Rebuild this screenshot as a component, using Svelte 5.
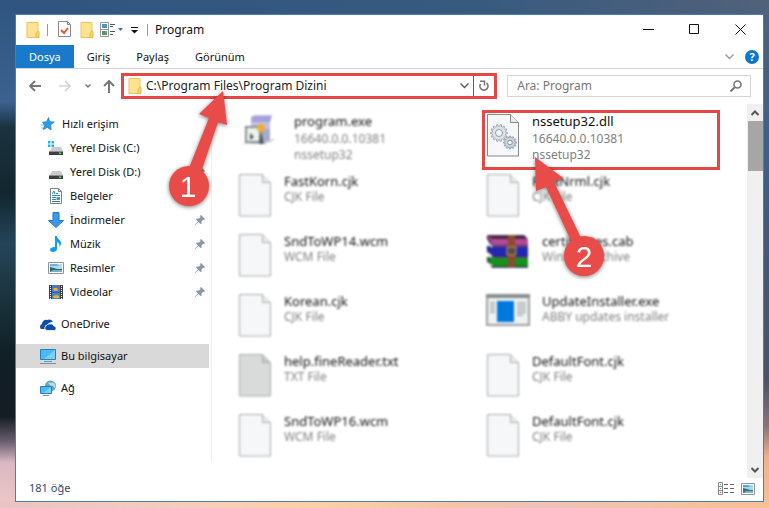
<script>
  const places = [
    { id: 'diskc', label: 'Yerel Disk (C:)', pin: false },
    { id: 'diskd', label: 'Yerel Disk (D:)', pin: true },
    { id: 'docs', label: 'Belgeler', pin: false },
    { id: 'down', label: 'İndirmeler', pin: true },
    { id: 'music', label: 'Müzik', pin: true },
    { id: 'pics', label: 'Resimler', pin: true },
    { id: 'video', label: 'Videolar', pin: true }
  ];
  const roots = [
    { id: 'cloud', label: 'OneDrive' },
    { id: 'pc', label: 'Bu bilgisayar', active: true },
    { id: 'net', label: 'Ağ' }
  ];
  const files = [
    { icon: 'setup', name: 'program.exe', info: ['16640.0.0.10381', 'nssetup32'] },
    { icon: 'dll', name: 'nssetup32.dll', info: ['16640.0.0.10381', 'nssetup32'], sharp: true },
    { icon: 'page', name: 'FastKorn.cjk', info: ['CJK File'] },
    { icon: 'page', name: 'FontNrml.cjk', info: ['CJK File'] },
    { icon: 'page', name: 'SndToWP14.wcm', info: ['WCM File'] },
    { icon: 'rar', name: 'certificates.cab', info: ['WinRAR archive'] },
    { icon: 'page', name: 'Korean.cjk', info: ['CJK File'] },
    { icon: 'app', name: 'UpdateInstaller.exe', info: ['ABBY updates installer'] },
    { icon: 'text', name: 'help.fineReader.txt', info: ['TXT File'] },
    { icon: 'page', name: 'DefaultFont.cjk', info: ['CJK File'] },
    { icon: 'page', name: 'SndToWP16.wcm', info: ['WCM File'] },
    { icon: 'page', name: 'DefaultFont.cjk', info: ['CJK File'] }
  ];
  // Outline of a gear: n teeth around a centre
  function gear(cx, cy, n, outer, inner) {
    const pts = [];
    for (let i = 0; i < n; i++) {
      for (const [k, r] of [[-0.26, inner], [-0.17, outer], [0.17, outer], [0.26, inner]]) {
        const a = ((i + k) / n) * Math.PI * 2;
        pts.push(`${(cx + r * Math.cos(a)).toFixed(2)},${(cy + r * Math.sin(a)).toFixed(2)}`);
      }
    }
    return pts.join(' ');
  }
</script>

{#snippet folder()}
  <svg width="15" height="18" viewBox="0 0 15 18" aria-hidden="true">
    <path d="M1 1.5h11v15H1z" fill="#ffe391" stroke="#eac35c" />
    <path d="M11.500 10.500h1.500v6h-3v-4z" fill="#f9d366" stroke="#e6b94a" />
  </svg>
{/snippet}

{#snippet picture()}
  <svg width="14" height="12" viewBox="0 0 14 12" aria-hidden="true">
    <path d="M.5.5h13v11H.5z" fill="#fff" stroke="#8d959a" />
    <path d="M2 2h10v8H2z" fill="#a9d3f3" />
    <path d="M2 2h5l2 2H2z" fill="#5a9fdc" />
    <path d="M2 5l4 1 3 1h3v3H2z" fill="#39756b" />
    <path d="M5 8h7v2H3z" fill="#7ab2cc" />
  </svg>
{/snippet}

{#snippet sideIcon(id)}
  <svg width="16" height="16" viewBox="0 0 16 16" aria-hidden="true">
    {#if id === 'star'}
      <path d="M8.500 1.500l1.200 4.200 4.600.3-3.700 2.900.6 5.100-3.900-2.600-4.100 2.400 1.400-4.500L2.500 6.200l4.200-.5z" fill="#2d9be8" stroke="#1b7cc9" stroke-width=".7" />
      <path d="M1 9h3M1 12h2" stroke="#6bbcf1" />
    {:else if id === 'diskc' || id === 'diskd'}
      {#if id === 'diskc'}
        <path d="M0 1h2.500v2.500H0zM3.500 1H6v2.500H3.500zM0 4.500h2.500V7H0zM3.500 4.500H6V7H3.500z" fill="#19b5f0" />
      {/if}
      <path d="M4 7h9l2 4H2z" fill="#c9cccd" />
      <path d="M1 11h14v4H1z" fill="#3c4043" />
      <path d="M1 11h14v1H1z" fill="#8c9092" />
      <path d="M11 12.500h2v1.500h-2z" fill="#39ee5d" />
    {:else if id === 'docs'}
      <path d="M2.500.5h8l3 3v12h-11z" fill="#fff" stroke="#7c8488" />
      <path d="M10.500.5v3h3" fill="none" stroke="#7c8488" />
      <path d="M4 6l2-3 1 3M8 5.500h2M4 7.500h8M4 9.500h4M4 11.500h4M4 13.500h8" fill="none" stroke="#2f85c8" />
      <path d="M8.500 9H12v3H8.500z" fill="#5a9b82" />
    {:else if id === 'down'}
      <path d="M5 .5h6v8h4.500L8 15.500.5 8.500H5z" fill="#3a98ea" stroke="#2379c8" />
    {:else if id === 'music'}
      <path d="M7 0h2c0 3 4 4 4 7 0 2-1 3-2 4 1-3 0-4-2-5v7c0 2-2 3-4 3s-3-1-3-2.500S4 11 7 11z" fill="#0ba1f2" />
    {:else if id === 'pics'}
      <path d="M.5 2.500h15v11H.5z" fill="#fff" stroke="#8d959a" />
      <path d="M2 4h12v8H2z" fill="#b5dbf4" />
      <path d="M2 4h7l2 2H2z" fill="#6eb2e4" />
      <path d="M2 7l4 1 3 1h5v3H2z" fill="#2f6b62" />
      <path d="M5 10h9v2H2z" fill="#78b0ca" />
    {:else if id === 'video'}
      <path d="M1 1h14v14H1z" fill="#3b3d40" />
      <path d="M4 1h8v7H4z" fill="#3d7cd4" />
      <path d="M4 8.500h8V15H4z" fill="#4585d6" />
      <path d="M6 4h4v2l-2 1-3-1zM5 12l4-1 2 1v2H6z" fill="#e8b432" />
      <path d="M9 2h3v3H9z" fill="#cf5136" />
      <path d="M2.500 2v13M13.500 2v13" stroke="#fff" stroke-dasharray="1 1" />
    {:else if id === 'cloud'}
      <path d="M1 13a3 3 0 0 1 1-5 4 4 0 0 1 5-4 5 5 0 0 1 6 2 5 5 0 0 0-5 2 4 4 0 0 0-3 5z" fill="#0b4da8" />
      <path d="M7 14.500a2.600 2.600 0 0 1-.5-5 3 3 0 0 1 3-1.500 3.600 3.600 0 0 1 4.500 2 2.300 2.300 0 0 1 .500 4.500z" fill="#0b4da8" stroke="#fff" stroke-width=".8" />
    {:else if id === 'pc'}
      <path d="M.5 1.500h15v10H.5z" fill="#49b9f8" stroke="#2c7fae" />
      <path d="M15 2v9H4z" fill="#7bd0fc" />
      <path d="M4 13.500h8M0 15.500h16" stroke="#6b93a8" />
    {:else}
      <circle cx="10.500" cy="6" r="5.500" fill="#5fa6c6" />
      <path d="M8 3c2-2 3 1 5-1 2 2 3 4 2 6-2 0-1-3-4-2z" fill="#b6dbe9" />
      <path d="M.5 6.500h11v7H.5z" fill="#49b9f8" stroke="#2c7fae" />
      <path d="M11 7v6H3z" fill="#7bd0fc" />
      <path d="M3 15.500h6" stroke="#6b93a8" />
    {/if}
  </svg>
{/snippet}

{#snippet fileIcon(kind)}
  {#if kind === 'setup'}
    <svg width="44" height="44" viewBox="0 0 44 44" aria-hidden="true">
      <path d="M13 4l4-2h17l-2 4v21l-4 4H13z" fill="#c3c1e2" />
      <path d="M14 3h20l-2 6H13z" fill="#a5a1dc" />
      <path d="M8 14h14v15H8z" fill="#eef3ec" stroke="#858c95" stroke-width="2" />
      <path d="M22 16h10v12H22z" fill="#a5abc8" />
      <circle cx="23" cy="15" r="4" fill="#f0ae38" />
      <path d="M23 18l3 13h-5zM12 20l4 4-4 3" fill="#4d5b60" />
      <path d="M6 30h8M31 29l5-3" stroke="#aaa" />
    </svg>
  {:else if kind === 'rar'}
    <svg width="44" height="44" viewBox="0 0 44 44" aria-hidden="true">
      <path d="M1 2h37l4 5v6H6L1 6z" fill="#b8479c" />
      <path d="M1 13h5l-1 1h37v10H6l-5-5z" fill="#2325b5" />
      <path d="M1 24h5v1h36v9H6l-5-5z" fill="#15921d" />
      <path d="M1 2h37l4 4H6z" fill="#4b2a45" />
      <path d="M1 4l5 9h36M1 14l5 10h36M1 25l5 9h36" fill="none" stroke="#332945" stroke-width="1.500" />
      <path d="M2 10l4 4M2 20l4 4M2 30l4 3" stroke="#dfe1e8" stroke-width="2" />
      <path d="M22 2h7v32h-7z" fill="#8a4c2c" />
      <path d="M21 14h9v8h-9z" fill="#594b43" stroke="#c99a55" />
    </svg>
  {:else if kind === 'app'}
    <svg width="44" height="44" viewBox="0 0 44 44" aria-hidden="true">
      <path d="M1 2h42v30H1z" fill="#f0f1f1" stroke="#9ba1a3" stroke-width="2" />
      <path d="M0 1h44v4H0z" fill="#858d8f" />
      <path d="M11 8h17v21H11z" fill="#0078dc" />
      <path d="M4 10h5M4 13h5M4 16h5M4 19h5M31 10h9M31 13h9M31 16h9M31 19h9M31 22h6" stroke="#b4b7b9" stroke-width="2" />
    </svg>
  {:else}
    <svg width="34" height="46" viewBox="0 0 34 46" aria-hidden="true">
      <path d="M1.500 1.500h23l8 8v33.500h-31z" fill={kind === 'text' ? '#d9dada' : '#f5f7f9'} stroke={kind === 'dll' ? '#888' : '#a8abac'} />
      <path d="M24.500 1.500v8h8" fill={kind === 'text' ? '#c8c9c9' : '#e9ebec'} stroke={kind === 'dll' ? '#888' : '#a8abac'} />
      {#if kind === 'dll'}
        <polygon points={gear(13, 20, 14, 8.5, 6.8)} fill="#dde3e9" stroke="#909ba6" stroke-width=".8" />
        <circle cx="13" cy="20" r="3.500" fill="#f7f9fa" stroke="#909ba6" />
        <polygon points={gear(24, 29.5, 12, 6.5, 5)} fill="#cbd5de" stroke="#8793a0" stroke-width=".8" />
        <circle cx="24" cy="29.500" r="2.300" fill="#f7f9fa" stroke="#8793a0" />
      {/if}
    </svg>
  {/if}
{/snippet}

<div class="desktop">
  <main class="window">
    <header class="titlebar">
      {@render folder()}
      <i class="rule first"></i>
      <button class="bare check" aria-label="Özellikler">
        <svg width="14" height="17" viewBox="0 0 14 17"><path d="M.5.5h9l3 3v12H.5z" fill="#fff" stroke="#8a8a8a" /><path d="M9.500.5v3h3" fill="none" stroke="#8a8a8a" /><path d="M3 9l3 3 4-5" fill="none" stroke="#ea5426" stroke-width="2" /></svg>
      </button>
      <button class="bare new" aria-label="Yeni klasör">{@render folder()}</button>
      <button class="bare view" aria-label="Görünüm seçenekleri">
        <svg width="23" height="16" viewBox="0 0 23 16"><path d="M.5.5h8v14h-8zM.5 7.500h8" fill="#fff" stroke="#999" /><path d="M2 2h5v4H2z" fill="#4b92d8" /><path d="M2 5h5v1H2zM2 9h5v4H2z" fill="#5b9662" /><path d="M5 9h2v2H5z" fill="#5ba2dc" /><path d="M10 2.500h5M10 4.500h3M10 9.500h5M10 12.500h3" stroke="#555" /><path d="M18 6h5l-2.500 3z" fill="#3f75b5" /></svg>
      </button>
      <button class="bare more" aria-label="Özelleştir">
        <svg width="7" height="8" viewBox="0 0 7 8"><path d="M0 1.500h7" stroke="#111" /><path d="M0 4h7L3.500 7.500z" fill="#111" /></svg>
      </button>
      <i class="rule"></i>
      <h1>Program</h1>
      <div class="controls">
        <button class="bare" aria-label="Simge durumuna küçült"><svg width="11" height="11"><path d="M0 5.500h11" stroke="#111" /></svg></button>
        <button class="bare" aria-label="Ekranı kapla"><svg width="11" height="11"><path d="M.5.5h9v9H.5z" fill="none" stroke="#111" /></svg></button>
        <button class="bare" aria-label="Kapat"><svg width="11" height="11"><path d="M.5.5l10 10M10.500.5l-10 10" stroke="#111" /></svg></button>
      </div>
    </header>

    <nav class="tabs">
      <button class="tab on">Dosya</button>
      <button class="tab">Giriş</button>
      <button class="tab">Paylaş</button>
      <button class="tab">Görünüm</button>
      <div class="help">
        <button class="bare" aria-label="Şeridi genişlet"><svg width="9" height="6"><path d="M.5.5l4 4 4-4" fill="none" stroke="#999" stroke-width="1.400" /></svg></button>
        <button class="bare question" aria-label="Yardım">?</button>
      </div>
    </nav>

    <div class="navrow">
      <button class="bare" aria-label="Geri"><svg width="12" height="12"><path d="M12 6H1M6 1L1 6l5 5" fill="none" stroke="#777" stroke-width="1.800" /></svg></button>
      <button class="bare fwd" aria-label="İleri"><svg width="12" height="12"><path d="M0 6h11M6 1l5 5-5 5" fill="none" stroke="#d5d5d5" stroke-width="1.600" /></svg></button>
      <button class="bare recent" aria-label="Son konumlar"><svg width="6" height="5"><path d="M.5.5L3 3 5.500.5" fill="none" stroke="#777" stroke-width="1.500" /></svg></button>
      <button class="bare up" aria-label="Yukarı"><svg width="12" height="13"><path d="M6 13V1M1 6l5-5 5 5" fill="none" stroke="#777" stroke-width="2" /></svg></button>
      <div class="address">
        {@render folder()}
        <input aria-label="Adres" value="C:\Program Files\Program Dizini" />
        <button class="bare" aria-label="Önceki konumlar"><svg width="9" height="6"><path d="M.5.5l4 4 4-4" fill="none" stroke="#555" stroke-width="1.300" /></svg></button>
        <button class="bare refresh" aria-label="Yenile"><svg width="12" height="12" viewBox="0 0 12 12"><path d="M8.500 3a4 4 0 1 1-6 1" fill="none" stroke="#777" stroke-width="1.700" /><path d="M2 1.200h4.500v4.300" fill="none" stroke="#777" stroke-width="1.500" /></svg></button>
      </div>
      <label class="search">
        <input aria-label="Ara" placeholder="Ara: Program" />
        <svg width="12" height="12"><circle cx="7.500" cy="4.500" r="3.500" fill="none" stroke="#777" stroke-width="1.600" /><path d="M5 7l-4.500 4.500" stroke="#777" stroke-width="2" /></svg>
      </label>
    </div>

    <div class="body">
      <aside>
        <a class="item root" href="#quick">{@render sideIcon('star')}<span>Hızlı erişim</span></a>
        {#each places as p}
          <a class="item" href={'#' + p.id}>
            {@render sideIcon(p.id)}<span>{p.label}</span>
            {#if p.pin}
              <svg class="pin" width="10" height="10" viewBox="0 0 10 10" aria-hidden="true"><path d="M6 0l4 4-1 1-1-.3L6.500 6.500l.2 2L5.500 9 3.500 7 .5 10 0 9.500 3 6.500 1 4.500 1.700 3.500l2 .2L5.500 2 5 1z" fill="#8896a1" /></svg>
            {/if}
          </a>
        {/each}
        {#each roots as r}
          <a class="item root spaced" class:active={r.active} href={'#' + r.id}>{@render sideIcon(r.id)}<span>{r.label}</span></a>
        {/each}
      </aside>

      <section class="files">
        {#each files as f}
          <div class="cell" class:marked={f.sharp}>
            <div class="file" class:blurred={!f.sharp}>
              {@render fileIcon(f.icon)}
              <div class="text" class:tall={f.info.length > 1}>
                <span class="name">{f.name}</span>
                {#each f.info as line}<span class="info">{line}</span>{/each}
              </div>
            </div>
          </div>
        {/each}
      </section>

      <div class="scroll">
        <button class="bare" aria-label="Yukarı kaydır"><svg width="8" height="6"><path d="M.5 5L4 1.500 7.500 5" fill="none" stroke="#555" stroke-width="2" /></svg></button>
        <i class="thumb"></i>
        <button class="bare" aria-label="Aşağı kaydır"><svg width="8" height="6"><path d="M.5 1L4 4.500 7.500 1" fill="none" stroke="#555" stroke-width="2" /></svg></button>
      </div>
    </div>

    <footer>
      <span>181 öğe</span>
      <button class="bare" aria-label="Ayrıntılar"><svg width="16" height="13"><path d="M.5.5h4v12h-4zM.5 4.500h4M.5 8.500h4" fill="#fff" stroke="#888" /><path d="M2 2h1v1H2zM2 6h1v1H2z" fill="#3c8ad8" /><path d="M2 10h1v1H2z" fill="#e33" /><path d="M6 2.500h10M6 6.500h10M6 10.500h10" stroke="#666" stroke-dasharray="4 2" /></svg></button>
      <button class="bare" aria-label="Büyük simgeler">{@render picture()}</button>
    </footer>
  </main>

  <svg class="callouts" width="769" height="300" viewBox="0 0 769 300" aria-hidden="true">
    <g fill="#e94b48">
      <path d="M223 91l4 34-9-3-17 50-12-4 20-50-10-4z" />
      <circle cx="189" cy="186" r="20" />
      <path d="M535 157l28 21-9 4 29 60-9 5-28-60-10 4z" />
      <circle cx="584" cy="256" r="20" />
    </g>
    <text x="188" y="197">1</text>
    <text x="584" y="267">2</text>
  </svg>
</div>

<style>
  :global(body) { margin: 0; }
  .desktop {
    position: relative;
    box-sizing: border-box;
    min-height: 100vh;
    display: flex;
    padding: 14px 5px 6px 15px;
    overflow: hidden;
    font: 11px/16px "Noto Sans", "Open Sans", sans-serif;
    color: #111;
    background:
      linear-gradient(90deg, #e9c4c4, #f6cdbd 25%, #fbd0a8 40%, #f5c3a8 60%, #efc2b8 70%, #f7c194) bottom / 100% 7px no-repeat,
      linear-gradient(#2f5580, #3b6290 20%, #1b3340 25%, #12262f 38%, #24455a 48%, #1b343f 58%, #0f2026 70%, #151d24 82%, #6b6070 87%, #d9b7c2 91%, #f0c9c6) left / 15px 100% no-repeat,
      linear-gradient(#50617b, #3f5f86 30%, #44597a 45%, #4b5465 75%, #8b7478 84%, #eeb191 90%, #f8bf97) right / 6px 100% no-repeat,
      linear-gradient(90deg, #2f5580, #375a7f 60%, #50617b);
  }
  .window {
    flex: 1;
    min-width: 0;
    display: flex;
    flex-direction: column;
    border: 1px solid #4a7dbd;
    background: #fff;
  }
  svg { display: block; flex: none; }
  button { font: inherit; color: inherit; }
  .bare {
    display: flex;
    align-items: center;
    justify-content: center;
    padding: 0;
    border: 0;
    background: none;
  }
  .titlebar {
    box-sizing: border-box;
    display: flex;
    align-items: center;
    height: 30px;
    padding: 0 0 1px 10px;
  }
  .rule { width: 1px; height: 12px; background: #999; }
  .first { margin: 0 10px 0 6px; }
  .check { margin-right: 8px; }
  .new { margin-right: 5px; }
  .view { margin-right: 8px; }
  .more { margin-right: 9px; }
  h1 { margin: 0 0 0 7px; font-size: 12px; font-weight: 400; }
  .controls { display: flex; margin-left: auto; }
  .controls .bare { width: 46px; height: 29px; }
  .tabs { display: flex; height: 23px; border-bottom: 1px solid #d5d6d7; }
  .tab { padding: 0 13px; border: 0; background: none; }
  .on { background: #1979ca; color: #fff; }
  .help { display: flex; align-items: center; gap: 11px; margin-left: auto; padding-right: 4px; }
  .question {
    width: 14px;
    height: 14px;
    border-radius: 50%;
    background: #0c77d3;
    color: #fff;
    font-weight: 700;
  }
  .navrow {
    box-sizing: border-box;
    display: flex;
    align-items: center;
    height: 35px;
    padding: 0 12px 1px 13px;
  }
  .fwd { margin-left: 18px; }
  .recent { margin-left: 14px; }
  .up { margin: 0 6px 0 12px; }
  .address {
    flex: 375 1 375px;
    min-width: 0;
    box-sizing: border-box;
    display: flex;
    align-items: center;
    height: 26px;
    padding-left: 4px;
    border: 3px solid #e84545;
  }
  input {
    flex: 1;
    min-width: 0;
    padding: 0;
    border: 0;
    outline: 0;
    background: none;
    font: inherit;
    font-size: 12px;
    color: #222;
  }
  .address input { margin-left: 3px; }
  .address .bare { width: 18px; }
  .address .refresh { width: 21px; height: 20px; border-left: 1px solid #1a6fc4; }
  .search {
    flex: 243 1 243px;
    min-width: 0;
    box-sizing: border-box;
    display: flex;
    align-items: center;
    height: 22px;
    margin-left: 10px;
    padding: 0 8px 0 9px;
    border: 1px solid #d5d5d5;
  }
  .search input::placeholder { color: #777; opacity: 1; }
  .body { flex: 1; display: flex; }
  aside {
    box-sizing: border-box;
    width: 196px;
    margin-bottom: 16px;
    padding: 8px 2px 0 0;
    border-right: 1px solid #f0f0f0;
  }
  .item {
    display: flex;
    align-items: center;
    gap: 6px;
    height: 24px;
    padding: 0 4px 0 32px;
    color: #111;
    text-decoration: none;
  }
  .root { padding-left: 24px; }
  .spaced { margin-top: 8px; gap: 5px; }
  .active { background: #d9d9d9; }
  .pin { margin-left: auto; }
  .files {
    flex: 1;
    display: grid;
    grid-template-columns: repeat(2, 248px);
    grid-auto-rows: 60px;
    align-content: start;
    padding: 6px 0 0 22px;
  }
  .cell { box-sizing: border-box; padding: 3px 0 0 4px; }
  .marked { margin-right: 10px; padding: 0 0 0 1px; border: 3px solid #e84545; }
  .file { display: flex; gap: 12px; }
  .blurred { filter: blur(1.2px); }
  .text { display: flex; flex-direction: column; }
  .name { font-size: 13px; }
  .tall .name { margin-bottom: 2px; }
  .info { font-size: 12px; color: #808080; }
  .scroll {
    display: flex;
    flex-direction: column;
    align-items: center;
    width: 16px;
    background: #f0f0f0;
  }
  .scroll .bare { width: 16px; height: 17px; }
  .scroll .bare:last-child { margin-top: auto; }
  .thumb { width: 15px; height: 50px; background: #a6a6a6; }
  footer {
    box-sizing: border-box;
    display: flex;
    align-items: center;
    gap: 7px;
    height: 23px;
    padding: 0 8px 2px 13px;
    color: #31496f;
  }
  footer span { margin-right: auto; padding-bottom: 2px; }
  .callouts {
    position: absolute;
    left: 0;
    top: 0;
    pointer-events: none;
    filter: drop-shadow(0 1px 2px #0008);
  }
  .callouts text {
    font: 30px "Liberation Sans", Arial, sans-serif;
    text-anchor: middle;
    fill: #fff;
  }
</style>
